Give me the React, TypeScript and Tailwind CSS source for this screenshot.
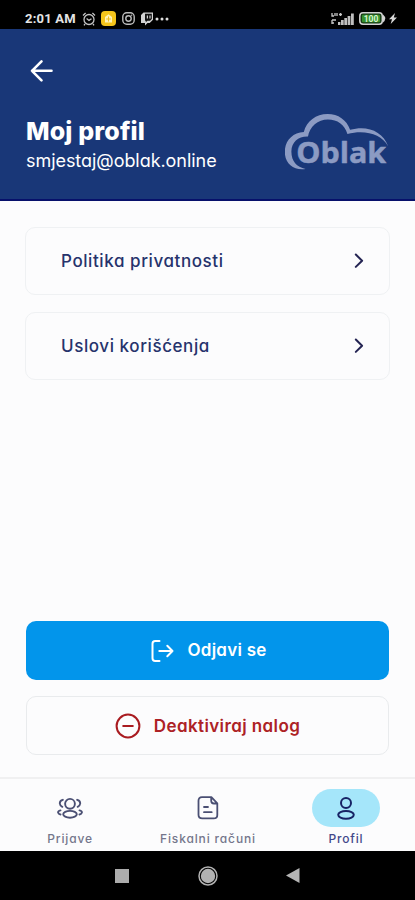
import type { ReactNode } from 'react';

function StatusBar() {
  return (
    <div className="flex h-[29px] items-center justify-between bg-black pt-2 pr-[18px] pl-[25px] text-[#e4e4e4]">
      <div className="flex items-center">
        <span className="w-[51px] font-[Roboto] text-[13px] leading-none font-bold tracking-[0.2px] whitespace-nowrap">
          2:01 AM
        </span>
        <svg className="ml-[6px] h-[14px] w-[14px]" viewBox="0 0 14 14" fill="none" stroke="#c4c4c4" strokeWidth="1.3">
          <circle cx="7" cy="7.5" r="5" />
          <path d="M1 3.4 3.6 1M13 3.4 10.4 1M4.6 6.5 7 8.4l2.5-1.7M3 12l-1 1.4M11 12l1 1.4" />
        </svg>
        <svg className="ml-[5px] h-[15px] w-[15px]" viewBox="0 0 15 15">
          <rect width="15" height="15" rx="4" fill="#f5c51b" />
          <path d="M4 6 7.5 3.2 11 6v5.5H4z" fill="#fff3b5" />
          <path d="M7.5 5.5v5M5.2 8h4.6" stroke="#efbd20" />
        </svg>
        <svg className="ml-[6px] h-[13px] w-[13px]" viewBox="0 0 13 13" fill="none" stroke="#bdbdbd" strokeWidth="1.4">
          <rect x=".8" y=".8" width="11.4" height="11.4" rx="4" />
          <circle cx="6.5" cy="6.5" r="2.7" />
          <path d="M9.2 3.3h1" />
        </svg>
        <svg className="ml-[5px] h-[14px] w-[14px]" viewBox="0 0 14 14">
          <path d="M3.5.5H13v7.2L9.7 11H7.5L5 13.5V11H1V3z" fill="#d2d2d2" />
          <path d="M5 1.7h6.8v5.2L10 8.7H7.4L5.8 10.2V8.7H5z" fill="#111" />
          <path d="M7.4 3.5v3M10 3.5v3" stroke="#d2d2d2" strokeWidth="1.2" />
        </svg>
        <svg className="h-[14px] w-[16px]" viewBox="0 0 16 14" fill="#dedede">
          <circle cx="3" cy="7" r="1.5" />
          <circle cx="8" cy="7" r="1.5" />
          <circle cx="13" cy="7" r="1.5" />
        </svg>
      </div>
      <div className="flex items-center">
        <svg className="h-[14px] w-[24px]" viewBox="0 0 24 14">
          <path d="M1 1v3h2M4 1v3M6 1v3M8 2.5h3M9.5 1v3M1 8h4M1 11h2M1 8v4" stroke="#c8c8c8" strokeWidth="1.3" fill="none" />
          <path d="M7 10h2.4v3H7zM10 8h2.7v5H10zM13.3 6H16v7h-2.7zM16.6 4h2.8v9h-2.8zM20 1.5h2.8V13H20z" fill="#c0c0c0" />
        </svg>
        <svg className="ml-[4px] h-[13px] w-[27px]" viewBox="0 0 27 13">
          <rect x=".8" y=".8" width="22.5" height="11.4" rx="3.2" fill="#173d16" stroke="#d2d2d2" strokeWidth="1.5" />
          <rect x="3" y="2.8" width="18" height="7.4" rx="1" fill="#35922c" />
          <path d="M24 2.5q4.5 4 0 8" fill="#d2d2d2" />
          <text x="12" y="9.6" textAnchor="middle" fill="#d9f5d2" fontFamily="Roboto" fontSize="8.5" fontWeight="700">
            100
          </text>
        </svg>
        <svg className="ml-[3px] h-[13px] w-[8px]" viewBox="0 0 8 13">
          <path d="M6 1 0 7.3h3L1.7 12 8 5.5H4.8z" fill="#d8d8d8" />
        </svg>
      </div>
    </div>
  );
}

function Logo() {
  return (
    <svg className="h-[60px] w-[106px]" viewBox="0 0 106 60" fill="#8c9bc3">
      <path d="M20.6 55C8.4 56.8-.1 49.4-.2 38-.3 27.2 7.3 18.6 18.8 18 21.6 7 31 0 42.6 0c10.6 0 19 5.8 22.5 15.8C82 11 97.8 17 103.2 32.4 96.4 20 80.4 15.6 62.4 19.9 59.6 10.6 52.4 5.6 42.9 5.6c-10 0-18.3 7-19.9 17C13.2 22.3 6.6 28.4 6.4 37.3c-.2 9.6 5.2 16 14.2 17.7z" />
      <text
        x="11.2"
        y="48.8"
        textLength="90"
        lengthAdjust="spacingAndGlyphs"
        fontFamily="Open Sans, sans-serif"
        fontSize="28.5"
        fontWeight="700"
        stroke="#8c9bc3"
        strokeWidth=".5"
      >
        Oblak
      </text>
    </svg>
  );
}

function Header() {
  return (
    <header className="h-[172px] border-b-2 border-[#07106b] bg-[#193778] pr-[24px] pl-[26px] text-white">
      <svg
        className="h-[54px] w-[30px] pt-[29px]"
        viewBox="0 0 30 25"
        fill="none"
        stroke="currentColor"
        strokeWidth="2.6"
        strokeLinecap="round"
        strokeLinejoin="round"
      >
        <path d="M25.5 12.8H6M15.5 3.3 6 12.8l9.5 9.5" />
      </svg>
      <div className="flex justify-between">
        <div className="pt-[31px]">
          <h1 className="text-[25px] leading-[34px] font-extrabold tracking-[0.15px]">Moj profil</h1>
          <p className="pt-px text-[18px] leading-[24px] tracking-[-0.05px]">smjestaj@oblak.online</p>
        </div>
        <div className="pt-[31px]">
          <Logo />
        </div>
      </div>
    </header>
  );
}

function LinkCard({ label }: { label: string }) {
  return (
    <button className="flex h-[68px] w-full items-center justify-between rounded-[10px] border-[1.5px] border-[#eff1f3] pr-[25px] pl-[35px] text-[17px] font-medium tracking-[0.58px] text-[#26336c]">
      <span className="pt-px">{label}</span>
      <svg
        className="h-[16px] w-[10px]"
        viewBox="0 0 10 16"
        fill="none"
        stroke="#242453"
        strokeWidth="2"
        strokeLinecap="round"
        strokeLinejoin="round"
      >
        <path d="m1.8 1.5 6.3 6.2-6.3 6.2" />
      </svg>
    </button>
  );
}

interface NavItemProps {
  label: string;
  active?: boolean;
  children: ReactNode;
}

function NavItem({ label, active, children }: NavItemProps) {
  return (
    <div className="flex flex-1 flex-col items-center">
      <div className={`flex h-[38px] w-[68px] items-center justify-center rounded-full ${active ? 'bg-[#a5e6fa] text-[#172365]' : 'text-[#4a4f73]'}`}>
        {children}
      </div>
      <span className={`mt-[3px] text-[12px] leading-[17px] font-medium whitespace-nowrap ${active ? 'tracking-[0.8px] text-[#43488a]' : 'tracking-[0.85px] text-[#74768b]'}`}>
        {label}
      </span>
    </div>
  );
}

function BottomNav() {
  return (
    <nav className="flex h-[74px] border-t-2 border-[#f0f0f1] pt-[10px] pl-px">
      <NavItem label="Prijave">
        <svg className="h-[22px] w-[26px]" viewBox="0 0 26 22" fill="none" stroke="currentColor" strokeWidth="1.9" strokeLinecap="round">
          <circle cx="13" cy="6.8" r="4.9" />
          <ellipse cx="13" cy="17.3" rx="6.8" ry="3.4" />
          <path d="M5.8 2.8Q2.6 3.6 2.8 6.5 3 8.8 5.3 9.8M20.2 2.8Q23.4 3.6 23.2 6.5 23 8.8 20.7 9.8M3.5 13.4Q.6 14.1 1.2 15.8 1.6 17.1 3.5 17.5M22.5 13.4Q25.4 14.1 24.8 15.8 24.4 17.1 22.5 17.5" />
        </svg>
      </NavItem>
      <NavItem label="Fiskalni računi">
        <svg className="h-[24px] w-[22px]" viewBox="0 0 22 24" fill="none" stroke="currentColor" strokeWidth="1.8" strokeLinecap="round" strokeLinejoin="round">
          <path d="M5 1.2h9.4l5.9 6.2v11.5q0 3.5-3.6 3.5H5.3q-3.8 0-3.8-3.6V4.8Q1.5 1.2 5 1.2zM14.2 1.7v3.1q0 2.7 2.7 2.7H20M7 11h4M7 16.2h7.7" />
        </svg>
      </NavItem>
      <NavItem label="Profil" active>
        <svg className="h-[24px] w-[20px]" viewBox="0 0 20 24" fill="none" stroke="currentColor" strokeWidth="2">
          <circle cx="10" cy="7" r="5" />
          <ellipse cx="10" cy="18.8" rx="7.8" ry="3.9" />
        </svg>
      </NavItem>
    </nav>
  );
}

function SystemBar() {
  return (
    <div className="flex h-[49px] items-center justify-between bg-black pr-[115px] pl-[115px]">
      <div className="h-[14px] w-[14px] bg-[#acacac]" />
      <svg className="h-[20px] w-[20px]" viewBox="0 0 20 20">
        <circle cx="10" cy="10" r="9" fill="none" stroke="#b2b2b2" strokeWidth="1.5" />
        <circle cx="10" cy="10" r="7.2" fill="#b2b2b2" />
      </svg>
      <svg className="h-[15px] w-[14px]" viewBox="0 0 14 15">
        <path d="M0 7.5 13.5 0v15z" fill="#b5b5b5" />
      </svg>
    </div>
  );
}

export default function App() {
  return (
    <div className="flex h-[900px] w-[415px] flex-col overflow-hidden bg-[#fcfcfd] font-[Inter,sans-serif] [font-feature-settings:'cv11','ss03']">
      <StatusBar />
      <Header />
      <main className="flex flex-1 flex-col px-[25px] pt-[26px] pb-[22px]">
        <div className="flex flex-col gap-[17px]">
          <LinkCard label="Politika privatnosti" />
          <LinkCard label="Uslovi korišćenja" />
        </div>
        <div className="mt-auto flex flex-col gap-[16px]">
          <button className="mx-px flex h-[59px] items-center justify-center gap-[13px] rounded-[10px] bg-[#0295eb] pl-[3px] text-[17px] font-semibold tracking-[0.25px] text-white">
            <svg className="h-[22px] w-[23px]" viewBox="0 0 23 22" fill="none" stroke="currentColor" strokeWidth="2" strokeLinecap="round" strokeLinejoin="round">
              <path d="M8.5 1H4.2Q1.5 1 1.5 3.7v14.6Q1.5 21 4.2 21h4.3M8.3 11h13.2M16.3 5.8l5.2 5.2-5.2 5.2" />
            </svg>
            <span className="pt-px">Odjavi se</span>
          </button>
          <button className="mx-px flex h-[59px] items-center justify-center gap-[13px] rounded-[10px] border-[1.5px] border-[#e9ebed] text-[17px] font-semibold tracking-[0.4px] text-[#ad2225]">
            <svg className="h-[26px] w-[26px]" viewBox="0 0 26 26" fill="none" stroke="#a91b20" strokeWidth="2" strokeLinecap="round">
              <circle cx="13" cy="13" r="11.4" />
              <path d="M8.2 13h9.6" />
            </svg>
            <span className="pt-[2px]">Deaktiviraj nalog</span>
          </button>
        </div>
      </main>
      <BottomNav />
      <SystemBar />
    </div>
  );
}
